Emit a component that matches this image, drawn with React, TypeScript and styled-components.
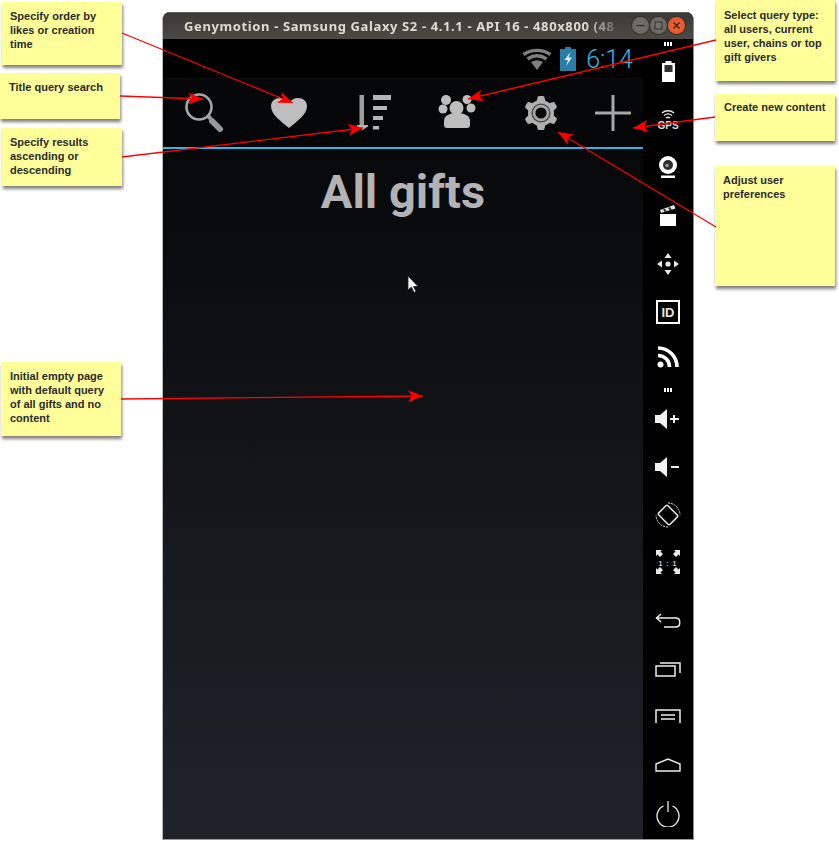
import React from 'react';
import styled, { createGlobalStyle } from 'styled-components';

const GlobalStyle = createGlobalStyle`
  html, body {
    margin: 0;
    padding: 0;
    background: #fff;
  }
  body {
    overflow: hidden;
    font-family: "Liberation Sans", Arial, sans-serif;
  }
`;

const Page = styled.div`
  position: relative;
  width: 839px;
  height: 843px;
  padding: 12px 0 0 162px;
  box-sizing: border-box;
  background: #fff;
  overflow: hidden;
`;

const Window = styled.div`
  width: 532px;
  height: 828px;
  display: flex;
  flex-direction: column;
  border-radius: 8px 8px 0 0;
  border-left: 1px solid #b9b9b9;
  border-right: 1px solid #8c8c8c;
  border-bottom: 1px solid #9a9a9a;
  box-sizing: border-box;
  overflow: hidden;
  background: #000;
`;

const TitleBar = styled.div`
  height: 27px;
  flex: none;
  display: flex;
  align-items: center;
  padding: 0 8px 0 21px;
  background: linear-gradient(#3a3935, #4b4a45);
  box-shadow: inset 0 1px 0 #5c5b56;
`;

const TitleText = styled.div`
  flex: none;
  white-space: nowrap;
  font-family: "Noto Sans", sans-serif;
  font-weight: 700;
  font-size: 13px;
  letter-spacing: 0.62px;
  color: #dfdbd2;
  -webkit-mask-image: linear-gradient(to right, #000 93%, rgba(0, 0, 0, 0.25) 100%);
  mask-image: linear-gradient(to right, #000 93%, rgba(0, 0, 0, 0.25) 100%);
`;

const WinButtons = styled.div`
  display: flex;
  gap: 1px;
  margin-left: auto;
`;

const WinButton = styled.div<{ $close?: boolean }>`
  width: 17px;
  height: 17px;
  border-radius: 50%;
  display: flex;
  align-items: center;
  justify-content: center;
  background: ${p => (p.$close ? 'radial-gradient(#f0643a, #e0512a)' : 'radial-gradient(#757570, #62615c)')};
  box-shadow: 0 0 0 1px #33322e;
`;

const Body = styled.div`
  flex: 1;
  display: flex;
  min-height: 0;
`;

const Phone = styled.div`
  width: 480px;
  flex: none;
  display: flex;
  flex-direction: column;
  position: relative;
`;

const StatusBar = styled.div`
  height: 39px;
  flex: none;
  display: flex;
  align-items: center;
  justify-content: flex-end;
  padding-right: 10px;
  background: #000;
`;

const Clock = styled.span`
  font-family: Roboto, sans-serif;
  font-weight: 300;
  font-size: 25px;
  color: #33b5e5;
  margin-left: 10px;
  margin-top: 2px;
`;

const ActionBar = styled.div`
  height: 69px;
  flex: none;
  display: flex;
  background: #050607;
  border-top: 1px solid #0e0e0e;
  box-sizing: border-box;
`;

const ActionItem = styled.div<{ $w: number }>`
  width: ${p => p.$w}px;
  display: flex;
  align-items: center;
  justify-content: center;
`;

const Divider = styled.div`
  height: 2px;
  flex: none;
  background: #33b5e5;
`;

const Content = styled.div`
  flex: 1;
  position: relative;
  background: linear-gradient(#07080a, #20242a);
`;

const Heading = styled.h1`
  margin: 11px 0 0;
  text-align: center;
  font-family: Roboto, sans-serif;
  font-weight: 700;
  font-size: 47px;
  line-height: 64px;
  color: #b3b3b3;
`;

const Cursor = styled.svg`
  position: absolute;
  left: 244px;
  top: 126px;
`;

const SideBar = styled.div`
  flex: 1;
  background: #000;
  display: flex;
  flex-direction: column;
  align-items: center;
`;

const SideItem = styled.div<{ $h: number; $gap: number }>`
  height: ${p => p.$h}px;
  margin-top: ${p => p.$gap}px;
  flex: none;
  display: flex;
  align-items: center;
  justify-content: center;
`;

const GripDots = styled.div`
  display: flex;
  gap: 1px;
`;

const GripDot = styled.span`
  width: 2px;
  height: 4px;
  background: #fff;
`;

const Note = styled.div<{ $x: number; $y: number; $w: number; $h: number; $px?: number; $py?: number }>`
  position: absolute;
  left: ${p => p.$x}px;
  top: ${p => p.$y}px;
  width: ${p => p.$w}px;
  height: ${p => p.$h}px;
  box-sizing: border-box;
  padding: ${p => p.$py ?? 7}px 6px 0 ${p => p.$px ?? 8}px;
  background: #ffff99;
  box-shadow: 1px 3px 3px rgba(60, 60, 60, 0.65);
  font-weight: 700;
  font-size: 11px;
  line-height: 14px;
  color: #2a2a2a;
`;

const Arrows = styled.svg`
  position: absolute;
  left: 0;
  top: 0;
  pointer-events: none;
`;

const notes = [
  { x: 2, y: 2, w: 120, h: 63, text: 'Specify order by likes or creation time' },
  { x: 0, y: 73, w: 120, h: 46, py: 7, px: 9, text: 'Title query search' },
  { x: 2, y: 128, w: 120, h: 58, text: 'Specify results ascending or descending' },
  { x: 716, y: 0, w: 119, h: 81, py: 8, text: 'Select query type: all users, current user, chains or top gift givers' },
  { x: 715, y: 94, w: 120, h: 47, py: 6, px: 9, text: 'Create new content' },
  { x: 715, y: 166, w: 120, h: 120, py: 7, text: 'Adjust user preferences' },
  { x: 1, y: 362, w: 120, h: 74, py: 7, px: 9, text: 'Initial empty page with default query of all gifts and no content' },
];

const arrows = [
  [122, 33, 293, 103],
  [120, 96, 203, 99],
  [122, 157, 363, 128],
  [716, 40, 468, 99],
  [715, 117, 633, 128],
  [716, 227, 558, 132],
  [121, 399, 423, 396],
];

const SearchIcon = () => (
  <svg width="48" height="48" viewBox="0 0 48 48">
    <circle cx="18" cy="18" r="12.500" fill="none" stroke="#a8a8a8" strokeWidth="2.600" />
    <path d="M27 30l3-3" stroke="#a0a0a0" strokeWidth="3" />
    <path d="M31 32l8 8" stroke="#999" strokeWidth="6" strokeLinecap="round" />
  </svg>
);

const HeartIcon = () => (
  <svg width="48" height="48" viewBox="0 0 48 48">
    <path d="M24 39C16 32 6 26 6 17c0-5 4-8 9-8 4 0 7 2 9 5 2-3 5-5 9-5 5 0 9 3 9 8 0 9-10 15-18 22z" fill="#bdbdbd" />
  </svg>
);

const SortIcon = () => (
  <svg width="48" height="48" viewBox="0 0 48 48">
    <rect x="10.500" y="6" width="4.500" height="31" fill="#9c9c9c" />
    <path d="M8 36h11v1.500L13.500 41 8 37.500z" fill="#b5b5b5" />
    <rect x="24" y="6" width="18" height="5" fill="#b5b5b5" />
    <rect x="24" y="17" width="14" height="4" fill="#b5b5b5" />
    <rect x="24" y="27" width="10" height="4" fill="#b5b5b5" />
    <rect x="24" y="37" width="6" height="3.500" fill="#b5b5b5" />
  </svg>
);

const UsersIcon = () => (
  <svg width="48" height="48" viewBox="0 0 48 48">
    <g fill="#bdbdbd">
      <circle cx="23.500" cy="19" r="7" />
      <circle cx="13" cy="11" r="5" />
      <circle cx="34" cy="10.500" r="4.500" />
      <circle cx="10" cy="20" r="4.500" />
      <circle cx="38" cy="19" r="4.500" />
      <path d="M11 36v-4c0-5 5-8 13-8s13 3 13 8v4c0 2-1 3-3 3H14c-2 0-3-1-3-3z" />
    </g>
  </svg>
);

const GearIcon = () => {
  const teeth = [0, 60, 120, 180, 240, 300];
  return (
    <svg width="48" height="48" viewBox="0 0 48 48">
      <g fill="#b0b0b0">
        {teeth.map(a => (
          <path key={a} d="M20.500 8.500c0-1 1-1.500 2-1.500h3c1 0 2 .5 2 1.500l1.500 6h-10z" transform={`rotate(${a} 24 24)`} />
        ))}
      </g>
      <circle cx="24" cy="24" r="13" fill="#b0b0b0" />
      <circle cx="24" cy="24" r="8.800" fill="none" stroke="#4e4e4e" strokeWidth="1.600" />
      <circle cx="24" cy="24" r="6.800" fill="#0a0a0a" stroke="#a6a6a6" strokeWidth="2.400" />
    </svg>
  );
};

const PlusIcon = () => (
  <svg width="48" height="48" viewBox="0 0 48 48">
    <rect x="22.500" y="6" width="3" height="36" fill="#a8a8a8" />
    <rect x="6" y="22.500" width="36" height="3" fill="#a8a8a8" />
  </svg>
);

const WifiIcon = () => (
  <svg width="30" height="22" viewBox="0 0 30 22">
    <g fill="none" stroke="#7f7f7f" strokeWidth="3.400">
      <path d="M1.500 6.500c8-5.500 19-5.500 27 0" />
      <path d="M5.500 11c6-4 13-4 19 0" />
    </g>
    <path d="M9 14c4-2.200 8-2.200 12 0l-6 8z" fill="#7f7f7f" />
  </svg>
);

const BatteryIcon = () => (
  <svg width="16" height="24" viewBox="0 0 16 24" style={{ marginLeft: 8 }}>
    <path d="M5 0h6v2h5v22H0V2h5z" fill="#2b7fa6" />
    <path d="M10.500 5L4.500 13h3.500l-2 6 6-8.500H8.500z" fill="#dff2fa" />
  </svg>
);

const Side = {
  Battery: () => (
    <svg width="13" height="21" viewBox="0 0 13 21">
      <path d="M3.500 0h6v2H13v19H0V2h3.500z" fill="#fff" />
      <rect x="2.500" y="4" width="8" height="7" fill="#333" />
    </svg>
  ),
  Gps: () => (
    <svg width="24" height="19" viewBox="0 0 24 19">
      <g fill="none" stroke="#e8e8e8" strokeWidth="1.300">
        <path d="M6 3c3.500-3 8.500-3 12 0" />
        <path d="M8 5.500c2.500-2 5.500-2 8 0" />
        <path d="M10 8c1.300-1 2.700-1 4 0" />
      </g>
      <text x="12" y="18.500" textAnchor="middle" fontFamily="Liberation Sans" fontWeight="700" fontSize="10" fill="#dcdcdc">GPS</text>
    </svg>
  ),
  Webcam: () => (
    <svg width="20" height="22" viewBox="0 0 20 22">
      <circle cx="10" cy="9" r="9" fill="#fff" />
      <circle cx="10" cy="9" r="5" fill="#2c2c2c" />
      <circle cx="9" cy="9.500" r="1.800" fill="#999" />
      <rect x="3" y="19.500" width="14" height="2.500" fill="#fff" />
    </svg>
  ),
  Clapper: () => (
    <svg width="18" height="22" viewBox="0 0 18 22">
      <path d="M1 6L15 1l1.500 3.500L2 9z" fill="#e5e5e5" />
      <path d="M4 5.500l2-.7 2 3-2 .7zM9 3.700l2-.7 2 3-2 .7z" fill="#333" />
      <rect x="1" y="10" width="16" height="12" fill="#fff" />
    </svg>
  ),
  Dpad: () => (
    <svg width="24" height="24" viewBox="0 0 24 24" fill="#e8e8e8">
      <path d="M12 1l3.500 5h-7zM12 23l-3.500-5h7zM1 12l5-3.500v7zM23 12l-5 3.500v-7z" />
      <circle cx="12" cy="12" r="2.600" />
    </svg>
  ),
  Id: () => (
    <svg width="24" height="24" viewBox="0 0 24 24">
      <rect x="1" y="1" width="22" height="22" fill="none" stroke="#fff" strokeWidth="2" />
      <text x="12" y="17" textAnchor="middle" fontFamily="Liberation Sans" fontWeight="700" fontSize="13" fill="#e6e6e6">ID</text>
    </svg>
  ),
  Rss: () => (
    <svg width="22" height="22" viewBox="0 0 22 22">
      <g fill="none" stroke="#fff" strokeWidth="3.600">
        <path d="M1 2c10.500 0 19 8.500 19 19" />
        <path d="M1 9.500c6.500 0 11.500 5 11.500 11.500" />
      </g>
      <circle cx="3.500" cy="18.500" r="3" fill="#fff" />
    </svg>
  ),
  VolUp: () => (
    <svg width="26" height="20" viewBox="0 0 26 20" fill="#f2f2f2">
      <path d="M0 6h5l7-6v20l-7-6H0z" />
      <path d="M15 9h3V6h2v3h4v2h-4v3h-2v-3h-3z" />
    </svg>
  ),
  VolDown: () => (
    <svg width="26" height="20" viewBox="0 0 26 20" fill="#f2f2f2">
      <path d="M0 6h5l7-6v20l-7-6H0z" />
      <rect x="16" y="9" width="8" height="2" />
    </svg>
  ),
  Rotate: () => (
    <svg width="26" height="26" viewBox="0 0 26 26" fill="none" stroke="#e8e8e8">
      <rect x="6.500" y="5" width="13" height="16" rx="1.500" strokeWidth="1.500" transform="rotate(-45 13 13)" />
      <path d="M13 1a12 12 0 0 1 12 12M13 25A12 12 0 0 1 1 13" strokeWidth="1" strokeDasharray="2 1" />
    </svg>
  ),
  OneToOne: () => (
    <svg width="24" height="24" viewBox="0 0 24 24">
      <g fill="#e8e8e8">
        <path d="M0 0h6L4.500 1.500 7 4 4 7 1.500 4.500 0 6zM24 0h-6l1.500 1.500L17 4l3 3 2.500-2.500L24 6zM0 24h6l-1.500-1.500L7 20l-3-3-2.500 2.500L0 18zM24 24h-6l1.500-1.500L17 20l3-3 2.500 2.500L24 18z" />
      </g>
      <text x="12" y="15.500" textAnchor="middle" fontFamily="Liberation Sans" fontWeight="700" fontSize="7" letterSpacing="1" fill="#d0d0d0">1 : 1</text>
    </svg>
  ),
  Back: () => (
    <svg width="26" height="16" viewBox="0 0 26 16" fill="none" stroke="#eee" strokeWidth="1.500">
      <path d="M1 5h20c5 0 5 9 0 9H9" />
      <path d="M6 1L1.500 5 6 9" />
    </svg>
  ),
  Recents: () => (
    <svg width="26" height="16" viewBox="0 0 26 16" fill="none" stroke="#eee" strokeWidth="1.500">
      <rect x="1" y="5" width="19" height="10" />
      <path d="M5 2h20v10" />
    </svg>
  ),
  Menu: () => (
    <svg width="26" height="14" viewBox="0 0 26 14" fill="none" stroke="#eee" strokeWidth="1.500">
      <path d="M1 14V1h24v13M6 6h14M6 10h14" />
    </svg>
  ),
  Home: () => (
    <svg width="26" height="14" viewBox="0 0 26 14" fill="none" stroke="#eee" strokeWidth="1.400">
      <path d="M1 13V6l12-5 12 5v7z" />
    </svg>
  ),
  Power: () => (
    <svg width="24" height="26" viewBox="0 0 24 26" fill="none" stroke="#eee" strokeWidth="1.300">
      <path d="M7.500 5A11 11 0 1 0 16.500 5" />
      <path d="M12 0v11" />
    </svg>
  ),
};

const Grip = () => (
  <GripDots>
    <GripDot />
    <GripDot />
    <GripDot />
  </GripDots>
);

const actions = [
  { w: 84, icon: <SearchIcon /> },
  { w: 84, icon: <HeartIcon /> },
  { w: 84, icon: <SortIcon /> },
  { w: 84, icon: <UsersIcon /> },
  { w: 84, icon: <GearIcon /> },
  { w: 60, icon: <PlusIcon /> },
];

// the emulator's toolbar rows are not evenly spaced, so each row has its own gap
const sideItems = [
  { h: 10, gap: 0, icon: <Grip /> },
  { h: 24, gap: 10, icon: <Side.Battery /> },
  { h: 24, gap: 24, icon: <Side.Gps /> },
  { h: 24, gap: 24, icon: <Side.Webcam /> },
  { h: 24, gap: 24, icon: <Side.Clapper /> },
  { h: 24, gap: 25, icon: <Side.Dpad /> },
  { h: 24, gap: 24, icon: <Side.Id /> },
  { h: 24, gap: 21, icon: <Side.Rss /> },
  { h: 24, gap: 9, icon: <Grip /> },
  { h: 24, gap: 5, icon: <Side.VolUp /> },
  { h: 24, gap: 24, icon: <Side.VolDown /> },
  { h: 24, gap: 24, icon: <Side.Rotate /> },
  { h: 24, gap: 23, icon: <Side.OneToOne /> },
  { h: 24, gap: 35, icon: <Side.Back /> },
  { h: 24, gap: 24, icon: <Side.Recents /> },
  { h: 24, gap: 23, icon: <Side.Menu /> },
  { h: 24, gap: 25, icon: <Side.Home /> },
  { h: 24, gap: 25, icon: <Side.Power /> },
];

export default function App() {
  return (
    <>
      <GlobalStyle />
      <Page>
        <Window>
          <TitleBar>
            <TitleText>Genymotion - Samsung Galaxy S2 - 4.1.1 - API 16 - 480x800 (48</TitleText>
            <WinButtons>
              <WinButton>
                <svg width="9" height="9" viewBox="0 0 9 9">
                  <rect x="0.500" y="3.800" width="8" height="1.500" fill="#33322e" />
                </svg>
              </WinButton>
              <WinButton>
                <svg width="9" height="9" viewBox="0 0 9 9">
                  <rect x="1" y="1" width="7" height="7" fill="none" stroke="#33322e" />
                </svg>
              </WinButton>
              <WinButton $close>
                <svg width="9" height="9" viewBox="0 0 9 9">
                  <path d="M1.500 1.500l6 6M7.500 1.500l-6 6" stroke="#4a2010" strokeWidth="1.500" />
                </svg>
              </WinButton>
            </WinButtons>
          </TitleBar>
          <Body>
            <Phone>
              <StatusBar>
                <WifiIcon />
                <BatteryIcon />
                <Clock>6:14</Clock>
              </StatusBar>
              <ActionBar>
                {actions.map((a, i) => (
                  <ActionItem key={i} $w={a.w}>
                    {a.icon}
                  </ActionItem>
                ))}
              </ActionBar>
              <Divider />
              <Content>
                <Heading>All gifts</Heading>
                <Cursor width="12" height="18" viewBox="0 0 12 18">
                  <path d="M1 1v14l3.500-3 2.500 5.500 2-1-2.500-5H11z" fill="#fff" stroke="#222" strokeWidth="0.800" />
                </Cursor>
              </Content>
            </Phone>
            <SideBar>
              {sideItems.map((s, i) => (
                <SideItem key={i} $h={s.h} $gap={s.gap}>
                  {s.icon}
                </SideItem>
              ))}
            </SideBar>
          </Body>
        </Window>

        {notes.map((n, i) => (
          <Note key={i} $x={n.x} $y={n.y} $w={n.w} $h={n.h} $px={n.px} $py={n.py}>
            {n.text}
          </Note>
        ))}

        <Arrows width="839" height="843" viewBox="0 0 839 843">
          <defs>
            <marker id="head" markerUnits="userSpaceOnUse" markerWidth="16" markerHeight="12" refX="15" refY="6" orient="auto">
              <path d="M0 0L15 6L0 12L4 6z" fill="#f00" />
            </marker>
          </defs>
          {arrows.map((a, i) => (
            <line key={i} x1={a[0]} y1={a[1]} x2={a[2]} y2={a[3]} stroke="#f00" strokeWidth="1.300" markerEnd="url(#head)" />
          ))}
        </Arrows>
      </Page>
    </>
  );
}
